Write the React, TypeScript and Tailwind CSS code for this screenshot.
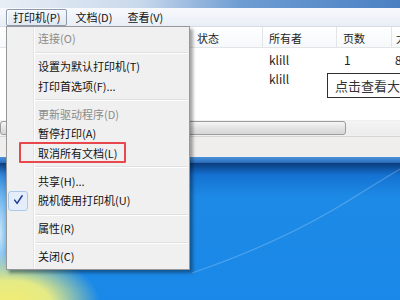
import React from "react";

type Item =
  | { kind: "sep" }
  | { kind: "item"; t: string; disabled?: boolean; check?: boolean; box?: boolean };

const items: Item[] = [
  { kind: "item", t: "连接(O)", disabled: true },
  { kind: "sep" },
  { kind: "item", t: "设置为默认打印机(T)" },
  { kind: "item", t: "打印首选项(F)..." },
  { kind: "sep" },
  { kind: "item", t: "更新驱动程序(D)", disabled: true },
  { kind: "item", t: "暂停打印(A)" },
  { kind: "item", t: "取消所有文档(L)", box: true },
  { kind: "sep" },
  { kind: "item", t: "共享(H)..." },
  { kind: "item", t: "脱机使用打印机(U)", check: true },
  { kind: "sep" },
  { kind: "item", t: "属性(R)" },
  { kind: "sep" },
  { kind: "item", t: "关闭(C)" },
];

function Spacer() {
  return (
    <div className="flex h-[2px]">
      <div className="w-[27px] shrink-0 border-r border-[#e2e3e3]" />
      <div className="flex-1 border-l border-white" />
    </div>
  );
}

function Menu() {
  return (
    <div className="absolute left-[6px] top-[26px] w-[184px] bg-[#f0f0f0] border border-[#979797] shadow-[3px_3px_3px_rgba(0,0,0,0.35)]">
      <Spacer />
      {items.map((it, i) =>
        it.kind === "sep" ? (
          <div key={i} className="flex h-[8.5px]">
            <div className="w-[27px] shrink-0 border-r border-[#e2e3e3]" />
            <div className="flex-1 border-l border-white flex items-center">
              <div className="w-full mr-[1px] border-t border-[#e0e0e0] border-b border-b-white" />
            </div>
          </div>
        ) : (
          <div key={i} className="flex h-[19.5px] relative">
            <div className="w-[27px] shrink-0 border-r border-[#e2e3e3] flex items-center">
              {it.check && (
                <div className="ml-[1px] w-[20px] h-[20px] shrink-0 rounded-[3px] border border-[#aac8ee] bg-[#e4eefb] flex items-center justify-center">
                  <svg width="20" height="20" viewBox="0 0 20 20">
                    <path d="M6.3 9 L9 12.6 L14.6 4.2" fill="none" stroke="#22399c" strokeWidth="1.7" strokeLinecap="round" strokeLinejoin="round" />
                  </svg>
                </div>
              )}
            </div>
            <div
              className={
                "flex-1 border-l border-white flex items-center pl-[3px] whitespace-nowrap " +
                (it.disabled ? "text-[#8b8b8b]" : "text-[#111]")
              }
            >
              {it.t}
            </div>
            {it.box && (
              <div className="absolute left-[12px] top-[-2px] w-[107px] h-[21px] border-2 border-[#e8474c] rounded-[1px]" />
            )}
          </div>
        )
      )}
      <Spacer />
    </div>
  );
}

export default function App() {
  return (
    <div className="w-[400px] h-[300px] overflow-hidden relative flex flex-col font-['Noto_Sans_CJK_SC','Noto_Sans',sans-serif] text-[11px] leading-none bg-white">
      {/* title strip */}
      <div className="h-[8px] shrink-0 bg-[linear-gradient(to_right,#e9eef5_0%,#c9d9ec_35%,#6e9dd3_60%,#4a80c2_100%)]" />
      {/* menubar */}
      <div className="h-[19px] shrink-0 flex items-center bg-[linear-gradient(to_bottom,#f7f9fc,#e9eef6)] border-b border-[#d6dde7] text-[#111]">
        <div className="ml-[6px] h-[17px] px-[6px] flex items-center border border-[#8d9bae] rounded-[2px] bg-[linear-gradient(to_bottom,#f3f6fa,#e2e8f0)] shadow-[inset_1px_1px_0_#ffffff]">
          打印机(P)
        </div>
        <div className="h-[17px] px-[7px] flex items-center border border-transparent">文档(D)</div>
        <div className="h-[17px] px-[6px] flex items-center border border-transparent">查看(V)</div>
      </div>
      {/* header */}
      <div className="h-[21px] shrink-0 flex bg-[linear-gradient(to_bottom,#ffffff,#f6f8fa)] border-b border-[#e2e4e7] text-[#1e1e1e]">
        <div className="w-[191px] shrink-0" />
        <div className="w-[72px] shrink-0 border-r border-[#e3e5e8] flex items-center pl-[6px] pt-[2px]">状态</div>
        <div className="w-[74px] shrink-0 border-r border-[#e3e5e8] flex items-center pl-[6px] pt-[2px]">所有者</div>
        <div className="w-[55px] shrink-0 border-r border-[#e3e5e8] flex items-center pl-[6px] pt-[2px]">页数</div>
        <div className="flex-1 flex items-center pl-[4px] pt-[2px] whitespace-nowrap">大小</div>
      </div>
      {/* rows */}
      <div className="h-[72px] shrink-0 flex flex-col pt-[2px] text-[#1e1e1e] text-[12px]">
        <div className="h-[19px] flex items-center">
          <div className="w-[269px] shrink-0" />
          <div className="w-[74px] shrink-0">klill</div>
          <div className="w-[52px] shrink-0 pl-[1px]">1</div>
          <div>8</div>
        </div>
        <div className="h-[19px] flex items-center">
          <div className="w-[269px] shrink-0" />
          <div>klill</div>
        </div>
      </div>
      {/* scrollbar */}
      <div className="h-[16px] shrink-0 flex bg-[#f0f0f0] py-[1px]">
        <div className="w-[346px] h-full border border-[#9c9c9c] rounded-[3px] bg-[linear-gradient(to_bottom,#f6f6f6,#e3e3e3_50%,#d6d6d6)]" />
        <div className="flex-1 bg-[linear-gradient(to_bottom,#f4f4f4,#ececec)]" />
      </div>
      {/* status bar */}
      <div className="h-[21px] shrink-0 bg-[#f0eded] border-t border-[#d5d5d5]" />
      {/* window bottom frame */}
      <div className="h-[6px] shrink-0 bg-[linear-gradient(to_bottom,#4a92dc,#3a80cc_50%,#2a69b4)]" />
      {/* desktop */}
      <div className="flex-1 relative bg-[radial-gradient(ellipse_90px_50px_at_10px_140px,#f3ed72_0%,#e4ea86_45%,rgba(190,225,160,0)_100%),radial-gradient(ellipse_14px_70px_at_0px_70px,rgba(220,240,250,0.9),rgba(220,240,250,0)_100%),linear-gradient(to_bottom,#0b3c7c_0px,#1472d2_12px,#1d8ae6_34px,#1a88e8_100%)]">
        <svg className="absolute inset-0" width="400" height="137" viewBox="0 0 400 137">
          <path d="M192 110 Q 280 80 348 38 Q 375 21 400 6" fill="none" stroke="rgba(255,255,255,0.22)" strokeWidth="1.3" />
        </svg>
      </div>

      <Menu />

      {/* tooltip */}
      <div className="absolute left-[327px] top-[73px] w-[90px] h-[25px] bg-white border border-[#2e2e2e] flex items-center pl-[7px] text-[13px] text-[#333] whitespace-nowrap">
        点击查看大图
      </div>
    </div>
  );
}
